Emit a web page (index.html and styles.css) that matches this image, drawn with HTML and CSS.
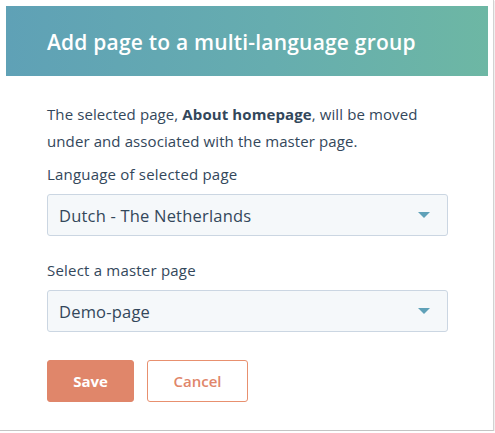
FILE: index.html
```html
<!DOCTYPE html>
<html>
<head>
<meta charset="utf-8">
<link rel="stylesheet" href="styles.css">
</head>
<body>
<div class="frame">
  <div class="header">
    <h1 class="title">Add page to a multi-language group</h1>
  </div>
  <div class="body">
    <p class="intro"><span>The selected page, <strong>About homepage</strong>, will be moved</span><br><span>under and associated with the master page.</span></p>
    <div class="field">
      <label class="label">Language of selected page</label>
      <div class="select">
        <span class="value">Dutch - The Netherlands</span>
        <span class="caret"></span>
      </div>
    </div>
    <div class="field">
      <label class="label">Select a master page</label>
      <div class="select">
        <span class="value">Demo-page</span>
        <span class="caret"></span>
      </div>
    </div>
    <div class="actions">
      <button class="btn btn-primary">Save</button>
      <button class="btn btn-secondary">Cancel</button>
    </div>
  </div>
</div>
</body>
</html>
```
FILE: styles.css
```css
html, body {
  margin: 0;
  padding: 0;
  background: #ffffff;
}
body {
  font-family: "Open Sans", Lato, sans-serif;
  color: #33475b;
}
.frame {
  box-sizing: border-box;
  width: 494px;
  height: 431px;
  padding: 6px 5px 0 6px;
  background: #ffffff;
  border-right: 1px solid #d2d2d2;
  border-bottom: 1px solid #c4c4c4;
  box-shadow: 1px 1px 1px rgba(0,0,0,0.06);
}
.header {
  height: 70px;
  display: flex;
  align-items: center;
  padding-left: 41px;
  background: linear-gradient(to right, #5fa1b6 0%, #66adaf 55%, #6db7a4 100%);
}
.title {
  margin: 0;
  padding-top: 1px;
  font-size: 21px;
  font-weight: 600;
  letter-spacing: 0.2px;
  color: #ffffff;
}
.body {
  padding: 25px 40px 0 41px;
}
.intro {
  margin: 0;
  font-size: 15px;
  line-height: 27px;
  letter-spacing: 0.1px;
  white-space: nowrap;
}
.intro strong {
  font-weight: 700;
}
.field {
  margin-top: 9px;
}
.field + .field {
  margin-top: 24px;
}
.label {
  display: block;
  font-size: 15px;
  line-height: 20px;
  letter-spacing: 0.2px;
  margin-bottom: 10px;
}
.select {
  box-sizing: border-box;
  height: 42px;
  display: flex;
  align-items: center;
  justify-content: space-between;
  padding: 0 17px 0 11px;
  background: #f5f8fa;
  border: 1px solid #cbd6e2;
  border-radius: 3px;
}
.value {
  font-size: 16.5px;
  letter-spacing: 0.2px;
  color: #33475b;
}
.caret {
  width: 0;
  height: 0;
  border-left: 6px solid transparent;
  border-right: 6px solid transparent;
  border-top: 6px solid #5fa1b8;
}
.actions {
  display: flex;
  gap: 13px;
  margin-top: 28px;
}
.btn {
  box-sizing: border-box;
  height: 42px;
  border-radius: 3px;
  font-family: "Open Sans", Lato, sans-serif;
  font-size: 15px;
  font-weight: 700;
  cursor: pointer;
}
.btn-primary {
  width: 87px;
  background: #e0866a;
  border: 1px solid #e0866a;
  color: #ffffff;
}
.btn-secondary {
  width: 101px;
  background: #ffffff;
  border: 1px solid #e8906f;
  color: #e0866a;
  font-weight: 600;
}
```
